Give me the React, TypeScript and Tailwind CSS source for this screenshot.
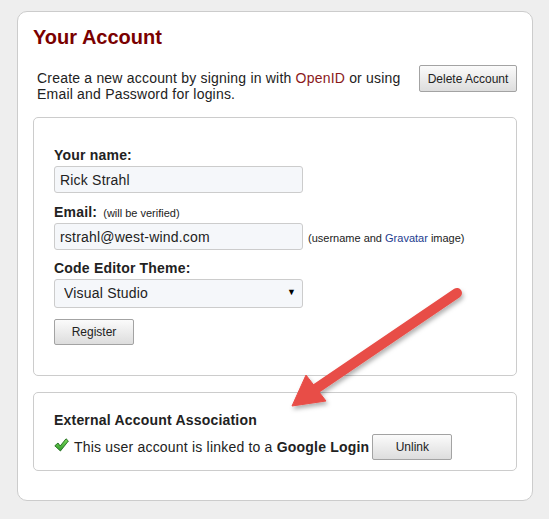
import React from 'react';

const btn =
  'h-[26px] border border-[#a3a3a3] rounded-[2px] bg-gradient-to-b from-[#fbfbfb] to-[#dddddd] text-[12px] text-[#222] leading-none tracking-normal';

const field =
  'w-[249px] border border-[#cccccc] rounded-[3px] bg-[#f5f7fa] text-[14px] text-[#222] outline-none';

const CheckIcon = () => (
  <svg width="15" height="14" viewBox="0 0 15 14" className="mr-[5px] -mt-[4px] shrink-0">
    <defs>
      <linearGradient id="chk" x1="0" y1="0" x2="0" y2="1">
        <stop offset="0" stopColor="#7ddc5c" />
        <stop offset="1" stopColor="#2f9a2a" />
      </linearGradient>
    </defs>
    <polygon
      points="0.8,7.8 4,5 6.2,8 12,0.8 14.4,3 6.4,13"
      fill="url(#chk)"
      stroke="#1f6a1d"
      strokeWidth="0.9"
      strokeLinejoin="round"
    />
  </svg>
);

const Arrow = () => (
  <svg
    width="549"
    height="519"
    viewBox="0 0 549 519"
    className="absolute left-0 top-0 pointer-events-none"
  >
    <defs>
      <filter id="shadow" x="-20%" y="-20%" width="140%" height="140%">
        <feDropShadow dx="1.5" dy="3" stdDeviation="2" floodColor="#000" floodOpacity="0.3" />
      </filter>
    </defs>
    <g filter="url(#shadow)" fill="#e84d47" stroke="#e84d47">
      <line x1="457" y1="293" x2="314" y2="390" strokeWidth="10" strokeLinecap="round" />
      <polygon points="292,406 306,375 326,401" strokeWidth="1" strokeLinejoin="round" />
    </g>
  </svg>
);

export default function App() {
  return (
    <div className="relative min-h-[519px] bg-[#eeeeee] pt-[11px] pl-[17px] font-['Liberation_Sans',Arial,sans-serif] text-[#222] tracking-[0.2px]">
      <div className="w-[516px] border border-[#cccccc] rounded-[10px] bg-white px-[15px] pt-[14px] pb-[29px]">
        <h2 className="text-[20px] leading-[23px] font-bold text-[#7a0000] tracking-normal">Your Account</h2>

        <div className="mt-[16px] flex items-start justify-between">
          <p className="mt-[5px] pl-[4px] text-[14px] leading-[16px]">
            Create a new account by signing in with <span className="text-[#8b1a1a]">OpenID</span> or using
            <br />
            Email and Password for logins.
          </p>
          <button className={`${btn} h-[27px] w-[98px] shrink-0`}>Delete Account</button>
        </div>

        <div className="mt-[15px] border border-[#cccccc] rounded-[5px] pl-[20px] pt-[29px] pb-[30px]">
          <div className="text-[14px] leading-[16px] font-bold">Your name:</div>
          <input className={`${field} mt-[3px] h-[27px] px-[5px]`} defaultValue="Rick Strahl" />

          <div className="mt-[11px] text-[14px] leading-[16px]">
            <span className="font-bold">Email:</span>
            <span className="ml-[6px] text-[11px] tracking-normal">(will be verified)</span>
          </div>
          <div className="mt-[2px] flex items-center">
            <input className={`${field} h-[27px] px-[5px]`} defaultValue="rstrahl@west-wind.com" />
            <span className="ml-[5px] mt-[4px] text-[11px] tracking-normal">
              (username and <span className="text-[#1d3d8f]">Gravatar</span> image)
            </span>
          </div>

          <div className="mt-[10px] text-[14px] leading-[16px] font-bold">Code Editor Theme:</div>
          <div className="relative mt-[3px] w-[249px]">
            <select className={`${field} h-[29px] pl-[9px] appearance-none`} defaultValue="vs">
              <option value="vs">Visual Studio</option>
              <option value="monokai">Monokai</option>
              <option value="github">GitHub</option>
            </select>
            <span className="absolute right-[7px] top-[9px] text-[9px] leading-none text-black pointer-events-none">
              ▼
            </span>
          </div>

          <button className={`${btn} mt-[11px] w-[80px]`}>Register</button>
        </div>

        <div className="mt-[16px] border border-[#cccccc] rounded-[5px] pl-[20px] pt-[19px] pb-[10px]">
          <div className="text-[14px] leading-[16px] font-bold">External Account Association</div>
          <div className="mt-[6px] flex items-center text-[14px] leading-[16px]">
            <CheckIcon />
            <span>
              This user account is linked to a <span className="font-bold">Google Login</span>
            </span>
            <button className={`${btn} ml-[3px] w-[80px]`}>Unlink</button>
          </div>
        </div>
      </div>
      <Arrow />
    </div>
  );
}
